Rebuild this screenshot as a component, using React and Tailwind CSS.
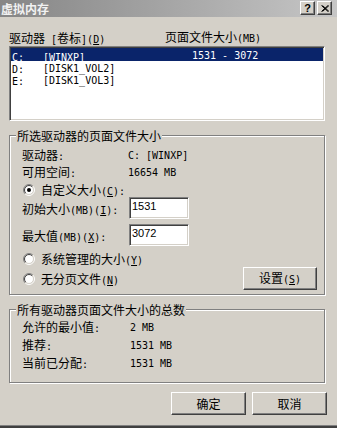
import React from "react";

const CJK_RE = /[\u2E80-\u9FFF\u3000-\u303F\uFF00-\uFFEF]/;
const RUN_RE = /[\u2E80-\u9FFF\u3000-\u303F\uFF00-\uFFEF]+|[^\u2E80-\u9FFF\u3000-\u303F\uFF00-\uFFEF]+/g;

function T({ s }) {
  const pieces = s.split(/(&.)/).filter(Boolean);
  return (
    <span className="whitespace-pre leading-[12px]">
      {pieces.map((p, i) => {
        if (p.length === 2 && p[0] === "&")
          return (
            <span key={i} className="font-['DejaVu_Sans_Mono',monospace] text-[10px] underline underline-offset-[1px]">
              {p[1]}
            </span>
          );
        return (p.match(RUN_RE) || []).map((r, j) =>
          CJK_RE.test(r) ? (
            <span key={i + "-" + j} className="font-['Noto_Sans_CJK_SC',sans-serif] text-[12px]">
              {r}
            </span>
          ) : (
            <span key={i + "-" + j} className="font-['DejaVu_Sans_Mono',monospace] text-[10px]">
              {r}
            </span>
          )
        );
      })}
    </span>
  );
}

const sunken =
  "border border-t-[#808080] border-l-[#808080] border-r-white border-b-white shadow-[inset_1px_1px_0_#404040,inset_-1px_-1px_0_#d4d0c8]";
const raised =
  "border border-t-white border-l-white border-r-[#404040] border-b-[#404040] shadow-[inset_-1px_-1px_0_#808080]";
const etched = "border border-[#808080] shadow-[inset_1px_1px_0_#ffffff,1px_1px_0_#ffffff]";

function Radio({ checked }) {
  const a = (r) => {
    const d = r * 0.7071;
    return [6 - d, 6 + d, 6 + d, 6 - d];
  };
  const [x1, y1, x2, y2] = a(5.5);
  const [u1, v1, u2, v2] = a(4.5);
  return (
    <svg width="12" height="12" viewBox="0 0 12 12" className="shrink-0">
      <circle cx="6" cy="6" r="4.5" fill="#ffffff" />
      <path d={`M${x1} ${y1} A5.5 5.5 0 0 1 ${x2} ${y2}`} stroke="#808080" fill="none" strokeWidth="1" />
      <path d={`M${x1} ${y1} A5.5 5.5 0 0 0 ${x2} ${y2}`} stroke="#ffffff" fill="none" strokeWidth="1" />
      <path d={`M${u1} ${v1} A4.5 4.5 0 0 1 ${u2} ${v2}`} stroke="#404040" fill="none" strokeWidth="1" />
      <path d={`M${u1} ${v1} A4.5 4.5 0 0 0 ${u2} ${v2}`} stroke="#d4d0c8" fill="none" strokeWidth="1" />
      {checked && <circle cx="6" cy="6" r="2" fill="#000000" />}
    </svg>
  );
}

function Btn({ label, className }) {
  return (
    <div className={"flex items-center justify-center bg-[#d4d0c8] " + raised + " " + className}>
      <T s={label} />
    </div>
  );
}

function Group({ title, className, children }) {
  return (
    <div className={"relative w-[316px] " + etched + " " + className}>
      <div className="absolute left-[6px] top-[-7px] h-[12px] flex items-center bg-[#d4d0c8] px-[1px]">
        <T s={title} />
      </div>
      {children}
    </div>
  );
}

function Input({ value }) {
  return (
    <div className={"w-[60px] h-[22px] bg-white pl-[2px] pt-[2px] " + sunken}>
      <span className="block font-['Liberation_Sans',sans-serif] text-[11px] leading-[12px]">{value}</span>
    </div>
  );
}

export default function App() {
  return (
    <div className="w-[337px] h-[428px] bg-[#d4d0c8] flex flex-col overflow-hidden text-black select-none">
      {/* title bar */}
      <div className="h-[17px] shrink-0 bg-linear-to-r from-[#868686] to-[#c6c6c6] flex items-start justify-between pl-[1px] pr-[5px] pt-[1px]">
        <span className="font-['Noto_Sans_CJK_SC',sans-serif] font-bold text-[12px] leading-[15px] text-[#f2f2f2]">
          虚拟内存
        </span>
        <div className="flex gap-[2px]">
          <div className={"w-[15px] h-[14px] bg-[#d4d0c8] flex items-center justify-center " + raised}>
            <span className="font-['Liberation_Sans',sans-serif] font-bold text-[11px] leading-[11px]">?</span>
          </div>
          <div className={"w-[15px] h-[14px] bg-[#d4d0c8] flex items-center justify-center " + raised}>
            <svg width="8" height="7" viewBox="0 0 8 7">
              <path d="M0.5 0.5 L7 6.5 M1.5 0.5 L8 6.5 M7 0.5 L0.5 6.5 M8 0.5 L1.5 6.5" stroke="#000" strokeWidth="1" />
            </svg>
          </div>
        </div>
      </div>

      <div className="flex flex-col px-[9px]">
        {/* column headers */}
        <div className="mt-[14px] h-[12px] flex items-center">
          <div className="w-[156px]">
            <T s="驱动器 [卷标](&D)" />
          </div>
          <T s="页面文件大小(MB)" />
        </div>

        {/* list */}
        <div className={"mt-[3px] h-[75px] w-[316px] bg-white " + sunken}>
          <div className="pt-[1px] pl-[1px] pr-[1px]">
            <div className="h-[13px] flex items-center bg-[#0a246a] text-white">
              <div className="w-[32px] pl-[1px]"><T s="C:" /></div>
              <div className="w-[149px]"><T s="[WINXP]" /></div>
              <T s="1531 - 3072" />
            </div>
            <div className="h-[12px] flex items-center">
              <div className="w-[32px] pl-[1px]"><T s="D:" /></div>
              <T s="[DISK1_VOL2]" />
            </div>
            <div className="h-[12px] flex items-center">
              <div className="w-[32px] pl-[1px]"><T s="E:" /></div>
              <T s="[DISK1_VOL3]" />
            </div>
          </div>
        </div>

        {/* group 1 */}
        <Group title="所选驱动器的页面文件大小" className="mt-[14px] h-[160px]">
          <div className="flex flex-col pl-[12px] pr-[7px]">
            <div className="mt-[12px] h-[12px] flex items-center">
              <div className="w-[106px]"><T s="驱动器:" /></div>
              <T s="C: [WINXP]" />
            </div>
            <div className="mt-[5px] h-[12px] flex items-center">
              <div className="w-[106px]"><T s="可用空间:" /></div>
              <T s="16654 MB" />
            </div>
            <div className="mt-[7px] h-[12px] flex items-center gap-[6px] pl-[1px]">
              <Radio checked />
              <T s="自定义大小(&C):" />
            </div>
            <div className="mt-[1px] h-[22px] flex items-center">
              <div className="w-[107px]"><T s="初始大小(MB)(&I):" /></div>
              <Input value="1531" />
            </div>
            <div className="mt-[5px] h-[22px] flex items-center">
              <div className="w-[107px]"><T s="最大值(MB)(&X):" /></div>
              <Input value="3072" />
            </div>
            <div className="mt-[7px] h-[12px] flex items-center gap-[6px] pl-[1px]">
              <Radio />
              <T s="系统管理的大小(&Y)" />
            </div>
            <div className="mt-[2px] h-[23px] flex items-center justify-between">
              <div className="flex items-center gap-[6px] pl-[1px] mt-[1px]">
                <Radio />
                <T s="无分页文件(&N)" />
              </div>
              <Btn label="设置(&S)" className="w-[74px] h-[23px]" />
            </div>
          </div>
        </Group>

        {/* group 2 */}
        <Group title="所有驱动器页面文件大小的总数" className="mt-[14px] h-[74px]">
          <div className="flex flex-col pl-[12px]">
            <div className="mt-[10px] h-[12px] flex items-center">
              <div className="w-[108px]"><T s="允许的最小值:" /></div>
              <T s="2 MB" />
            </div>
            <div className="mt-[6px] h-[12px] flex items-center">
              <div className="w-[108px]"><T s="推荐:" /></div>
              <T s="1531 MB" />
            </div>
            <div className="mt-[6px] h-[12px] flex items-center">
              <div className="w-[108px]"><T s="当前已分配:" /></div>
              <T s="1531 MB" />
            </div>
          </div>
        </Group>

        {/* buttons */}
        <div className="mt-[9px] flex justify-end gap-[6px] pr-[1px]">
          <Btn label="确定" className="w-[75px] h-[23px]" />
          <Btn label="取消" className="w-[75px] h-[23px]" />
        </div>
      </div>

      {/* bottom frame */}
      <div className="mt-auto h-[3px] shrink-0 border-t border-[#808080] bg-[#404040]" />
    </div>
  );
}
